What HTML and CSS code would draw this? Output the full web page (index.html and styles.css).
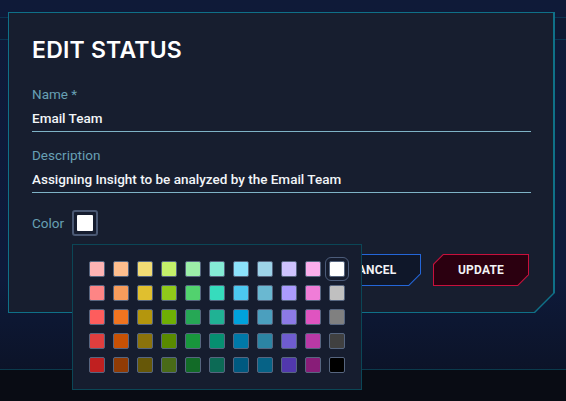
FILE: index.html
```html
<!DOCTYPE html>
<html lang="en">
<head>
<meta charset="utf-8">
<title>Edit Status</title>
<link rel="stylesheet" href="styles.css">
</head>
<body>
<div class="page">
  <header class="appbar"><div class="appbar-inner"></div></header>
  <main class="stage"></main>
  <footer class="footer"></footer>

  <section class="dialog">
    <h1 class="title">EDIT STATUS</h1>
    <div class="field">
      <label class="label">Name *</label>
      <div class="input">Email Team</div>
    </div>
    <div class="field field-desc">
      <label class="label">Description</label>
      <div class="input">Assigning Insight to be analyzed by the Email Team</div>
    </div>
    <div class="color-row">
      <span class="label">Color</span>
      <div class="picker">
        <button class="trigger"><span class="trigger-fill"></span></button>
        <div class="palette">
          <span class="swatch" style="background:#feb3b3"></span>
          <span class="swatch" style="background:#ffbe8e"></span>
          <span class="swatch" style="background:#f2dc74"></span>
          <span class="swatch" style="background:#c4f06a"></span>
          <span class="swatch" style="background:#9ceea8"></span>
          <span class="swatch" style="background:#85ecd6"></span>
          <span class="swatch" style="background:#8ce2fc"></span>
          <span class="swatch" style="background:#9dd3e8"></span>
          <span class="swatch" style="background:#cec3fe"></span>
          <span class="swatch" style="background:#fcaeec"></span>
          <span class="swatch selected" style="background:#ffffff"></span>

          <span class="swatch" style="background:#fd8585"></span>
          <span class="swatch" style="background:#f79c5c"></span>
          <span class="swatch" style="background:#e0bf2f"></span>
          <span class="swatch" style="background:#90c91a"></span>
          <span class="swatch" style="background:#52d26e"></span>
          <span class="swatch" style="background:#36dcbd"></span>
          <span class="swatch" style="background:#4cc8f0"></span>
          <span class="swatch" style="background:#6ab8d1"></span>
          <span class="swatch" style="background:#ab9bfe"></span>
          <span class="swatch" style="background:#f07dd8"></span>
          <span class="swatch" style="background:#c0c0c0"></span>

          <span class="swatch" style="background:#fd5d5d"></span>
          <span class="swatch" style="background:#f07420"></span>
          <span class="swatch" style="background:#b4960d"></span>
          <span class="swatch" style="background:#6faf04"></span>
          <span class="swatch" style="background:#26a855"></span>
          <span class="swatch" style="background:#20b294"></span>
          <span class="swatch" style="background:#00a2dc"></span>
          <span class="swatch" style="background:#4b9fbe"></span>
          <span class="swatch" style="background:#8c7ae6"></span>
          <span class="swatch" style="background:#df54c0"></span>
          <span class="swatch" style="background:#808080"></span>

          <span class="swatch" style="background:#e03e3e"></span>
          <span class="swatch" style="background:#c75105"></span>
          <span class="swatch" style="background:#8b720b"></span>
          <span class="swatch" style="background:#598a00"></span>
          <span class="swatch" style="background:#18963c"></span>
          <span class="swatch" style="background:#068f70"></span>
          <span class="swatch" style="background:#0079a8"></span>
          <span class="swatch" style="background:#2c84a3"></span>
          <span class="swatch" style="background:#6e5ccf"></span>
          <span class="swatch" style="background:#b939a6"></span>
          <span class="swatch" style="background:#404040"></span>

          <span class="swatch" style="background:#c02020"></span>
          <span class="swatch" style="background:#903b05"></span>
          <span class="swatch" style="background:#665708"></span>
          <span class="swatch" style="background:#496a17"></span>
          <span class="swatch" style="background:#126b27"></span>
          <span class="swatch" style="background:#0c6a55"></span>
          <span class="swatch" style="background:#005980"></span>
          <span class="swatch" style="background:#066286"></span>
          <span class="swatch" style="background:#5138ad"></span>
          <span class="swatch" style="background:#881d78"></span>
          <span class="swatch" style="background:#000000"></span>
        </div>
      </div>
    </div>
    <div class="actions">
      <button class="btn btn-cancel"><span class="btn-text">CANCEL</span></button>
      <button class="btn btn-update"><span class="btn-text">UPDATE</span></button>
    </div>
  </section>
</div>
</body>
</html>
```

FILE: styles.css
```css
* { box-sizing: border-box; }

body {
  margin: 0;
  background: #090c14;
  font-family: Roboto, "Noto Sans", sans-serif;
}

.page {
  position: relative;
  width: 566px;
  height: 401px;
  display: flex;
  flex-direction: column;
  overflow: hidden;
  background: linear-gradient(180deg, #0f1a38 0%, #0e1a3a 70%, #0b1122 100%);
}

.appbar {
  height: 40px;
  padding-top: 17px;
}

.appbar-inner {
  height: 23px;
  border-top: 1px solid #0b3552;
  border-bottom: 1px solid #0b3552;
  background: #0e1933;
}

.stage { flex: 1; }

.footer {
  height: 32px;
  border-top: 1px solid #0b3a4c;
  background: #090c14;
}

/* dialog */
.dialog {
  position: absolute;
  left: 8px;
  top: 12px;
  width: 547px;
  height: 301px;
  padding: 24px 24px 0 24px;
  z-index: 1;
  color: #f0f3f7;
}

.dialog::before,
.dialog::after {
  content: "";
  position: absolute;
  z-index: -1;
}

.dialog::before {
  inset: 0;
  background: #0f7088;
  clip-path: polygon(0 0, 100% 0, 100% calc(100% - 20px), calc(100% - 20px) 100%, 0 100%);
}

.dialog::after {
  inset: 1px 2px 1px 1px;
  background: #171e2f;
  clip-path: polygon(0 0, 100% 0, 100% calc(100% - 19px), calc(100% - 19px) 100%, 0 100%);
}

.title {
  margin: 0;
  font-family: Inter, Roboto, sans-serif;
  font-size: 23px;
  line-height: 28px;
  font-weight: 600;
  letter-spacing: 0.2px;
  color: #ffffff;
}

.field { margin-top: 22px; }
.field-desc { margin-top: 15px; }

.label {
  display: block;
  font-size: 13.5px;
  line-height: 16px;
  color: #67a0b4;
}

.input {
  margin-top: 8px;
  font-size: 13.5px;
  line-height: 16px;
  font-weight: 500;
  padding-bottom: 5px;
  border-bottom: 1px solid #7fb3c6;
  color: #f2f5f8;
}

.color-row {
  margin-top: 17px;
  display: flex;
  align-items: center;
  gap: 8px;
  height: 26px;
}

.picker {
  position: relative;
  width: 26px;
  height: 26px;
}

.trigger {
  display: block;
  width: 26px;
  height: 26px;
  padding: 3px;
  margin: 0;
  border: 2px solid #4a5873;
  border-radius: 3px;
  background: #161d2f;
}

.trigger-fill {
  display: block;
  width: 16px;
  height: 16px;
  background: #ffffff;
  border-radius: 1px;
}

.palette {
  position: absolute;
  left: 0;
  top: 34px;
  z-index: 5;
  display: grid;
  grid-template-columns: repeat(11, 16px);
  grid-auto-rows: 16px;
  gap: 8px;
  padding: 16px;
  background: #161d2f;
  border: 1px solid #0b4656;
}

.swatch {
  display: block;
  width: 16px;
  height: 16px;
  border: 1px solid #56657f;
  border-radius: 2px;
}

.swatch.selected {
  outline: 1px solid #4c5c7a;
  outline-offset: 3px;
}

/* actions */
.actions {
  margin-top: 18px;
  margin-right: 2px;
  display: flex;
  justify-content: flex-end;
  gap: 12px;
}

.btn {
  position: relative;
  width: 96px;
  height: 32px;
  padding: 0;
  border: 0;
  background: transparent;
  font-family: Roboto, "Noto Sans", sans-serif;
  font-size: 12px;
  font-weight: 700;
  color: #f2f2f5;
  letter-spacing: 0.2px;
}

.btn::before,
.btn::after {
  content: "";
  position: absolute;
}

.btn::before { inset: 0; }
.btn::after { inset: 1px; }

.btn-text {
  position: relative;
  z-index: 1;
}

.btn-cancel::before {
  background: #2466d8;
  clip-path: polygon(0 0, 100% 0, 100% calc(100% - 12px), calc(100% - 12px) 100%, 0 100%);
}

.btn-cancel::after {
  background: #0f1729;
  clip-path: polygon(0 0, 100% 0, 100% calc(100% - 11.5px), calc(100% - 11.5px) 100%, 0 100%);
}

.btn-update::before {
  background: #c8103c;
  clip-path: polygon(10px 0, 100% 0, 100% calc(100% - 11px), calc(100% - 11px) 100%, 0 100%, 0 10px);
}

.btn-update::after {
  background: #2b0010;
  clip-path: polygon(9.5px 0, 100% 0, 100% calc(100% - 10.5px), calc(100% - 10.5px) 100%, 0 100%, 0 9.5px);
}
```
